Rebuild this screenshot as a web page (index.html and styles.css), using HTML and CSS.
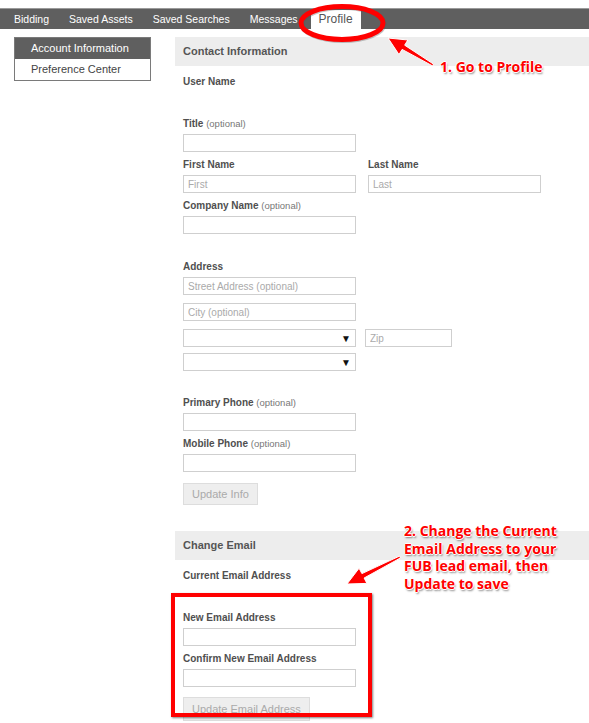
FILE: index.html
```html
<!DOCTYPE html>
<html lang="en">
<head>
  <meta charset="UTF-8">
  <meta name="viewport" content="width=device-width, initial-scale=1.0">
  <title>Profile - Account Information</title>
  <link rel="stylesheet" href="styles.css">
</head>
<body>

<div class="tabs">
  <a href="#">Bidding</a>
  <a href="#">Saved Assets</a>
  <a href="#">Saved Searches</a>
  <a href="#">Messages</a>
  <a href="#" class="active">Profile</a>
</div>

<div class="layout">
  <ul class="side-menu">
    <li class="current">Account Information</li>
    <li>Preference Center</li>
  </ul>

  <div class="content">
    <div class="panel">
      <h2 class="panel-title">Contact Information</h2>
      <div class="panel-body">
        <div class="field">
          <label>User Name</label>
          <div class="value"></div>
        </div>
        <div class="field">
          <label>Title <span class="opt">(optional)</span></label>
          <input type="text">
        </div>
        <div class="row name-row">
          <div class="field">
            <label>First Name</label>
            <input type="text" placeholder="First">
          </div>
          <div class="field">
            <label>Last Name</label>
            <input type="text" placeholder="Last">
          </div>
        </div>
        <div class="field">
          <label>Company Name <span class="opt">(optional)</span></label>
          <input type="text">
        </div>
        <div class="spacer"></div>

        <div class="field address">
          <label>Address</label>
          <input type="text" placeholder="Street Address (optional)">
          <input type="text" placeholder="City (optional)">
          <div class="row zip-row">
            <div class="select"><span class="caret">&#9660;</span></div>
            <input type="text" class="zip" placeholder="Zip">
          </div>
          <div class="select second"><span class="caret">&#9660;</span></div>
        </div>

        <div class="field phone">
          <label>Primary Phone <span class="opt">(optional)</span></label>
          <input type="text">
        </div>
        <div class="field">
          <label>Mobile Phone <span class="opt">(optional)</span></label>
          <input type="text">
        </div>
        <button class="btn">Update Info</button>
      </div>
    </div>

    <div class="panel">
      <h2 class="panel-title">Change Email</h2>
      <div class="panel-body">
        <div class="field">
          <label>Current Email Address</label>
          <div class="value"></div>
        </div>
        <div class="field">
          <label>New Email Address</label>
          <input type="text">
        </div>
        <div class="field">
          <label>Confirm New Email Address</label>
          <input type="text">
        </div>
        <button class="btn">Update Email Address</button>
      </div>
    </div>
  </div>
</div>

<!-- screenshot annotations -->
<svg class="marks" width="589" height="723" viewBox="0 0 589 723">
  <ellipse cx="342" cy="23" rx="41" ry="16.5" fill="none" stroke="#555" stroke-opacity="0.35" stroke-width="5" transform="translate(1 1)"/>
  <ellipse cx="342" cy="23" rx="41" ry="16.5" fill="none" stroke="#f00" stroke-width="5"/>
  <polygon points="388,38 407.8,40 404.7,45.2 433.5,64.1 432.5,65.9 402.1,49.4 399,54.6" fill="#f00" stroke="#fff" stroke-width="1"/>
  <polygon points="347,584 359.1,568.2 361.9,573.6 399.5,556.1 400.5,557.9 364.1,578 366.9,583.4" fill="#f00" stroke="#fff" stroke-width="1"/>
</svg>
<div class="note note-one">1. Go to Profile</div>
<div class="note note-two">2. Change the Current<br>Email Address to your<br>FUB lead email, then<br>Update to save</div>
<div class="highlight"></div>

</body>
</html>
```

FILE: styles.css
```css
body {
  font-family: "Liberation Sans", Arial, sans-serif;
  margin: 0;
  padding: 0;
  background-color: #fff;
  color: #555;
}

.tabs {
  display: flex;
  align-items: flex-end;
  margin-top: 8px;
  height: 20px;
  padding-left: 4px;
  background-color: #5f5f5f;
  border-top: 1px solid #9a9a9a;
}

.tabs a {
  color: #fff;
  text-decoration: none;
  font-size: 10.5px;
  line-height: 20px;
  padding: 0 10px;
}

.tabs a.active {
  background-color: #fff;
  color: #555;
  font-size: 12px;
  line-height: 19px;
  height: 19px;
  margin-left: 3px;
  padding: 0 8px;
}

.layout {
  display: flex;
  margin-top: 8px;
}

.side-menu {
  list-style: none;
  margin: 0 24px 0 14px;
  padding: 0;
  width: 137px;
  align-self: flex-start;
  border: 1px solid #7a7a7a;
  box-sizing: border-box;
}

.side-menu li {
  font-size: 11px;
  line-height: 21px;
  padding-left: 16px;
  color: #444;
}

.side-menu li.current {
  background-color: #5f5f5f;
  color: #fff;
  line-height: 21px;
}

.content {
  flex: 1;
}

.panel {
  margin-bottom: 26px;
}

.panel-title {
  margin: 0;
  height: 29px;
  line-height: 29px;
  padding-left: 8px;
  background-color: #ededed;
  font-size: 11px;
  font-weight: bold;
  color: #555;
}

.panel-body {
  padding: 9px 0 0 8px;
}

.field {
  margin-bottom: 6px;
}

.field label {
  display: block;
  font-size: 10px;
  font-weight: bold;
  line-height: 14px;
  margin-bottom: 3px;
  color: #4f4f4f;
}

.field .opt {
  font-weight: normal;
  font-size: 9.5px;
  color: #777;
}

.value {
  height: 19px;
}

.spacer {
  height: 20px;
}

input,
.select {
  display: block;
  box-sizing: border-box;
  width: 173px;
  height: 18px;
  margin: 0;
  padding: 0 4px;
  border: 1px solid #cfcfcf;
  background-color: #fff;
  font-family: "Liberation Sans", Arial, sans-serif;
  font-size: 10px;
  color: #555;
}

input::placeholder {
  color: #aaa;
}

.row {
  display: flex;
}

.name-row {
  gap: 12px;
}

.address input + input {
  margin-top: 8px;
}

.zip-row {
  gap: 9px;
  margin-top: 8px;
}

.zip-row .zip {
  width: 87px;
}

.select {
  display: flex;
  justify-content: flex-end;
  align-items: center;
  padding-right: 4px;
}

.select.second {
  margin-top: 6px;
}

.caret {
  font-size: 10px;
  color: #111;
}

.phone {
  margin-top: 25px;
}

.btn {
  display: block;
  margin-top: 11px;
  height: 22px;
  padding: 0 8px;
  font-family: "Liberation Sans", Arial, sans-serif;
  font-size: 11px;
  color: #aaa;
  background-color: #eee;
  border: 1px solid #ddd;
}

.panel:last-child .btn {
  margin-top: 10px;
  height: 24px;
}

/* annotations drawn over the screenshot */
.marks {
  position: absolute;
  top: 0;
  left: 0;
  pointer-events: none;
}

.note {
  position: absolute;
  font-family: "Open Sans", sans-serif;
  font-weight: bold;
  font-size: 14px;
  line-height: 17.7px;
  color: #f00;
  text-shadow: 1px 0 0 #fff, -1px 0 0 #fff, 0 1px 0 #fff, 0 -1px 0 #fff, 1px 2px 2px rgba(0, 0, 0, 0.45);
}

.note-one {
  left: 440px;
  top: 58px;
}

.note-two {
  left: 404px;
  top: 522px;
}

.highlight {
  position: absolute;
  left: 171px;
  top: 593px;
  width: 193px;
  height: 116px;
  border: 4px solid #f00;
  box-shadow: 1px 1px 2px rgba(0, 0, 0, 0.5);
}
```
